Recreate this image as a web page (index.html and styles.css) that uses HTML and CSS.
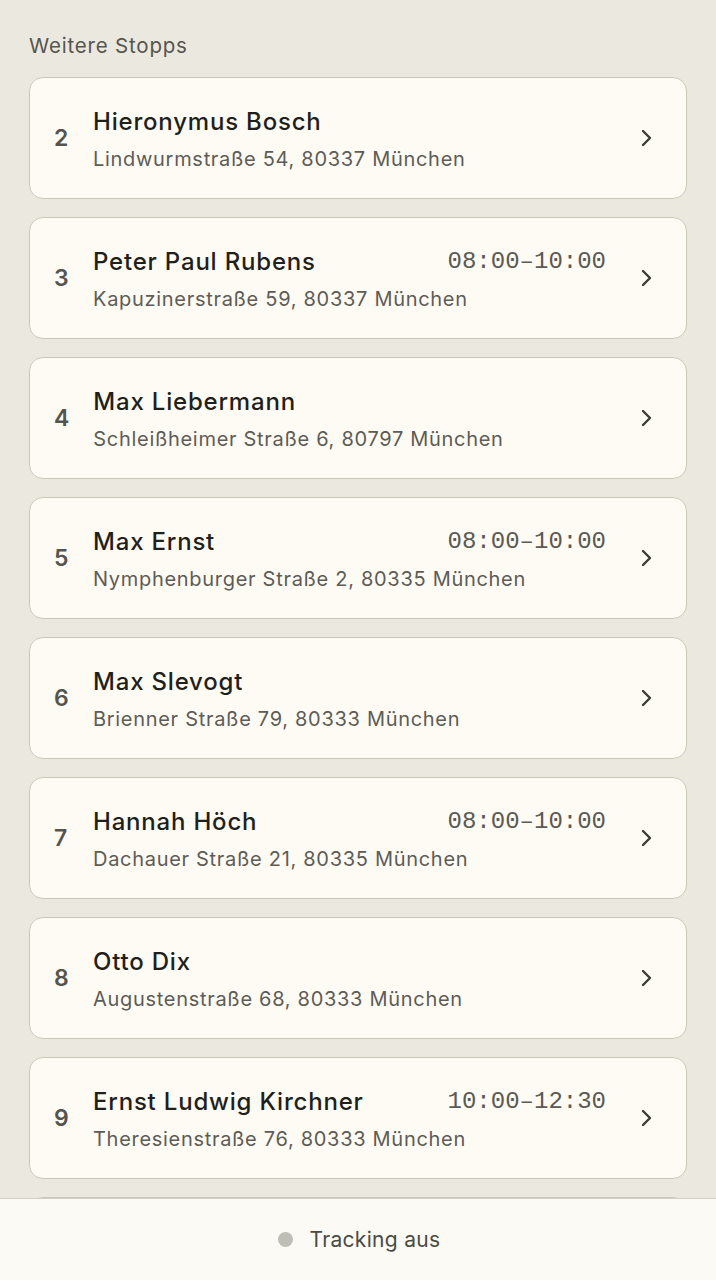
FILE: index.html
```html
<!DOCTYPE html>
<html lang="de">
<head>
<meta charset="utf-8">
<link rel="stylesheet" href="styles.css">
</head>
<body>
<main class="page">
  <h2 class="section-title">Weitere Stopps</h2>
  <ul class="stops">
    <li class="stop"><span class="num">2</span><div class="info"><div class="top"><span class="name">Hieronymus Bosch</span></div><div class="addr">Lindwurmstraße 54, 80337 München</div></div><svg class="chev" viewBox="0 0 12 18"><path d="M2 2l7 7-7 7"/></svg></li>
    <li class="stop"><span class="num">3</span><div class="info"><div class="top"><span class="name">Peter Paul Rubens</span><span class="time">08:00–10:00</span></div><div class="addr">Kapuzinerstraße 59, 80337 München</div></div><svg class="chev" viewBox="0 0 12 18"><path d="M2 2l7 7-7 7"/></svg></li>
    <li class="stop"><span class="num">4</span><div class="info"><div class="top"><span class="name">Max Liebermann</span></div><div class="addr">Schleißheimer Straße 6, 80797 München</div></div><svg class="chev" viewBox="0 0 12 18"><path d="M2 2l7 7-7 7"/></svg></li>
    <li class="stop"><span class="num">5</span><div class="info"><div class="top"><span class="name">Max Ernst</span><span class="time">08:00–10:00</span></div><div class="addr">Nymphenburger Straße 2, 80335 München</div></div><svg class="chev" viewBox="0 0 12 18"><path d="M2 2l7 7-7 7"/></svg></li>
    <li class="stop"><span class="num">6</span><div class="info"><div class="top"><span class="name">Max Slevogt</span></div><div class="addr">Brienner Straße 79, 80333 München</div></div><svg class="chev" viewBox="0 0 12 18"><path d="M2 2l7 7-7 7"/></svg></li>
    <li class="stop"><span class="num">7</span><div class="info"><div class="top"><span class="name">Hannah Höch</span><span class="time">08:00–10:00</span></div><div class="addr">Dachauer Straße 21, 80335 München</div></div><svg class="chev" viewBox="0 0 12 18"><path d="M2 2l7 7-7 7"/></svg></li>
    <li class="stop"><span class="num">8</span><div class="info"><div class="top"><span class="name">Otto Dix</span></div><div class="addr">Augustenstraße 68, 80333 München</div></div><svg class="chev" viewBox="0 0 12 18"><path d="M2 2l7 7-7 7"/></svg></li>
    <li class="stop"><span class="num">9</span><div class="info"><div class="top"><span class="name">Ernst Ludwig Kirchner</span><span class="time">10:00–12:30</span></div><div class="addr">Theresienstraße 76, 80333 München</div></div><svg class="chev" viewBox="0 0 12 18"><path d="M2 2l7 7-7 7"/></svg></li>
    <li class="stop stop-hidden"></li>
  </ul>
</main>
<footer class="tracking">
  <span class="dot"></span><span class="tracking-label">Tracking aus</span>
</footer>
</body>
</html>
```

FILE: styles.css
```css
* { box-sizing: border-box; }
html, body { margin: 0; padding: 0; }
body {
  background: #ebe8df;
  font-family: Inter, "Liberation Sans", sans-serif;
  color: #1f1f1b;
  width: 716px;
  height: 1280px;
  overflow: hidden;
}
.page {
  padding: 32px 29px 0 29px;
}
.section-title {
  margin: 0 0 17px 0;
  font-size: 20.5px;
  font-weight: 400;
  color: #56554e;
  line-height: 28px;
  letter-spacing: 0.8px;
}
.stops {
  list-style: none;
  margin: 0;
  padding: 0;
  display: flex;
  flex-direction: column;
  gap: 18px;
}
.stop {
  height: 122px;
  background: #fdfbf4;
  border: 1.5px solid #ccc8b9;
  border-radius: 14px;
  display: flex;
  align-items: center;
  padding: 0 33px 0 24px;
}
.num {
  font-size: 23px;
  font-weight: 600;
  color: #55544e;
  min-width: 15px;
  margin-right: 24px;
}
.info {
  flex: 1;
  display: flex;
  flex-direction: column;
  gap: 7px;
  margin-top: 2px;
}
.top {
  display: flex;
  justify-content: space-between;
  align-items: center;
}
.name {
  font-size: 24px;
  font-weight: 500;
  color: #1f1f1b;
  line-height: 32px;
  letter-spacing: 0.8px;
}
.time {
  font-family: "Liberation Mono", "DejaVu Sans Mono", monospace;
  font-size: 24px;
  color: #5a5953;
  line-height: 32px;
  margin-right: 1px;
}
.addr {
  font-size: 20px;
  color: #5d5c56;
  line-height: 28px;
  letter-spacing: 0.7px;
}
.chev {
  width: 12px;
  height: 18px;
  margin-left: 34px;
  flex: none;
}
.chev path {
  fill: none;
  stroke: #3c3c37;
  stroke-width: 2.4;
  stroke-linecap: round;
  stroke-linejoin: round;
}
.tracking {
  position: fixed;
  left: 0;
  right: 0;
  bottom: 0;
  height: 82px;
  background: #fcfaf4;
  border-top: 1.5px solid #d3cfc2;
  display: flex;
  align-items: center;
  justify-content: center;
  gap: 17px;
  padding-left: 2px;
}
.dot {
  width: 15px;
  height: 15px;
  border-radius: 50%;
  background: #bfbeb6;
}
.tracking-label {
  font-size: 21px;
  color: #4a4a44;
  letter-spacing: 0.3px;
}
```
